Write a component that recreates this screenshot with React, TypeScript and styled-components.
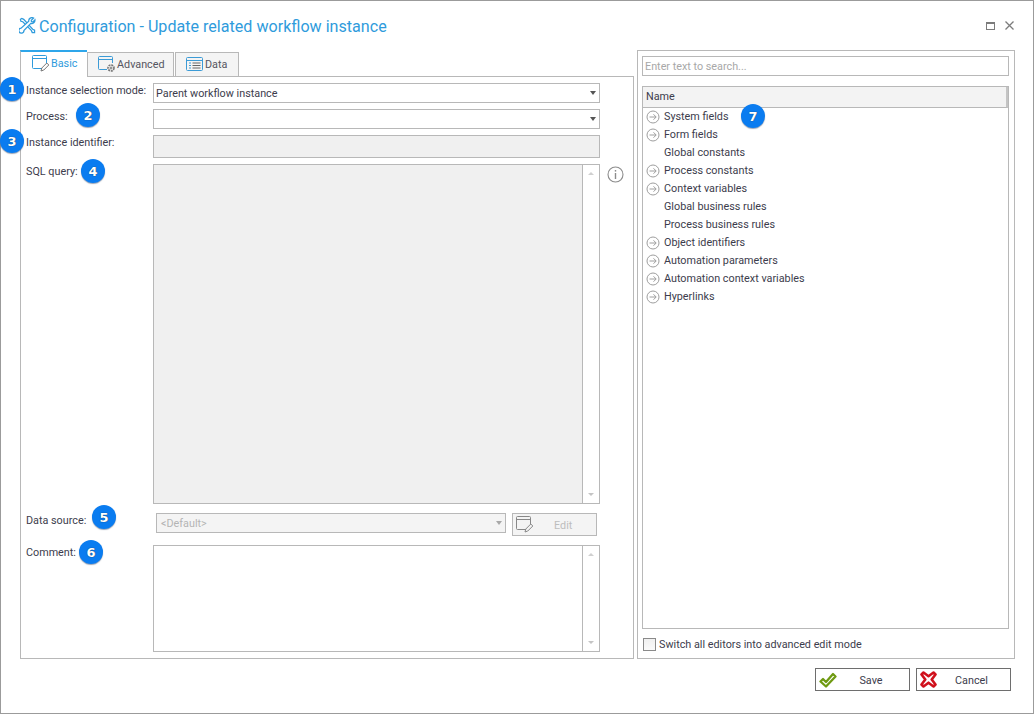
import React from "react";
import styled, { createGlobalStyle } from "styled-components";

const Global = createGlobalStyle`
  html, body { margin: 0; padding: 0; background: #fff; }
  * { box-sizing: border-box; }
`;

const FONT = `Roboto, "Noto Sans", "Liberation Sans", sans-serif`;
const TEXT = "#3c3c4c";
const LINE = "#b8b8b8";

const Win = styled.div`
  position: relative;
  width: 1034px;
  height: 714px;
  border: 1px solid #9b9b9b;
  background: #fff;
  font-family: ${FONT};
  font-size: 10.8px;
  color: ${TEXT};
  display: flex;
  flex-direction: column;
`;
const TitleBar = styled.div`
  height: 49px;
  flex: none;
  display: flex;
  align-items: center;
  padding: 2px 19px 0 17px;
`;
const TitleIcon = styled.span`
  display: flex;
  margin: -3px 0 0 1px;
`;
const Title = styled.div`
  font-size: 16.1px;
  color: #2f9bdc;
  margin: 0 0 0 3px;
  flex: 1;
  white-space: nowrap;
`;
const WinButtons = styled.div`
  display: flex;
  align-items: center;
  gap: 10px;
  margin-top: -2px;
`;
const Main = styled.div`
  display: flex;
  gap: 3px;
  padding-left: 19px;
  height: 609px;
  flex: none;
`;
const LeftCol = styled.div`
  width: 614px;
  display: flex;
  flex-direction: column;
`;
const Tabs = styled.div`
  height: 27px;
  flex: none;
  display: flex;
  margin-bottom: -1px;
`;
const Tab = styled.div<{ $active?: boolean; $w: number; $gap: number }>`
  width: ${(p) => p.$w}px;
  display: flex;
  align-items: center;
  gap: ${(p) => p.$gap}px;
  padding-left: ${(p) => (p.$active ? 11 : 10)}px;
  padding-bottom: ${(p) => (p.$active ? 2 : 1)}px;
  background: ${(p) => (p.$active ? "#fff" : "#f4f4f4")};
  border: 1px solid ${LINE};
  border-top: ${(p) => (p.$active ? "2px solid #2ea6ea" : `1px solid ${LINE}`)};
  border-bottom: ${(p) => (p.$active ? "none" : `1px solid ${LINE}`)};
  border-right: ${(p) => (p.$active ? "none" : `1px solid ${LINE}`)};
  margin-top: ${(p) => (p.$active ? 0 : 2)}px;
  margin-right: ${(p) => (p.$active ? 0 : 1)}px;
  color: ${(p) => (p.$active ? "#2f9bdc" : "#555560")};
  position: relative;
  z-index: ${(p) => (p.$active ? 2 : 1)};
`;
const TabPanel = styled.div`
  flex: 1;
  border: 1px solid ${LINE};
  padding: 6px 0 0 5px;
  display: flex;
  flex-direction: column;
`;
const Row = styled.div<{ $h: number; $mb?: number }>`
  height: ${(p) => p.$h}px;
  margin-bottom: ${(p) => p.$mb ?? 6}px;
  display: grid;
  grid-template-columns: 127px 447px 1fr;
  flex: none;
`;
const Label = styled.div`
  line-height: 15px;
  white-space: nowrap;
`;
const Field = styled.div<{ $disabled?: boolean }>`
  border: 1px solid ${LINE};
  background: ${(p) => (p.$disabled ? "#f0f0f0" : "#fff")};
  display: flex;
  align-items: center;
  padding-left: 2px;
  white-space: nowrap;
`;
const Caret = styled.span<{ $dim?: boolean }>`
  margin-left: auto;
  margin-right: 3px;
  width: 0;
  height: 0;
  border-left: 3.5px solid transparent;
  border-right: 3.5px solid transparent;
  border-top: 4px solid ${(p) => (p.$dim ? "#a8a8a8" : "#555")};
`;
const TextArea = styled.div<{ $disabled?: boolean }>`
  border: 1px solid ${LINE};
  background: ${(p) => (p.$disabled ? "#f0f0f0" : "#fff")};
  display: flex;
  justify-content: flex-end;
`;
const Scroll = styled.div`
  width: 17px;
  border-left: 1px solid ${LINE};
  background: #fff;
  display: flex;
  flex-direction: column;
  justify-content: space-between;
  align-items: center;
  padding: 7px 0;
`;
const ArrowUp = styled.span`
  width: 0;
  height: 0;
  border-left: 3px solid transparent;
  border-right: 3px solid transparent;
  border-bottom: 3px solid #d0d0d0;
`;
const ArrowDown = styled.span`
  width: 0;
  height: 0;
  border-left: 3px solid transparent;
  border-right: 3px solid transparent;
  border-top: 3px solid #c4c4c4;
`;
const InfoCell = styled.div`
  padding: 2px 0 0 7px;
`;
const SourceCell = styled.div`
  display: flex;
  align-items: flex-start;
  padding-left: 3px;
  gap: 6px;
`;
const SourceSelect = styled.div`
  width: 350px;
  height: 20px;
  border: 1px solid ${LINE};
  background: #f4f4f4;
  color: #b4b4b4;
  display: flex;
  align-items: center;
  padding-left: 4px;
`;
const EditBtn = styled.div`
  width: 85px;
  height: 23px;
  border: 1px solid ${LINE};
  background: #f4f4f4;
  color: #bdbdbd;
  display: flex;
  align-items: center;
  padding-left: 3px;
`;
const EditText = styled.span`
  margin-left: 20px;
  padding-top: 2px;
`;
const RightPanel = styled.div`
  width: 378px;
  border: 1px solid ${LINE};
  padding: 5px 5px 0 4px;
  display: flex;
  flex-direction: column;
`;
const Search = styled.div`
  height: 20px;
  flex: none;
  border: 1px solid ${LINE};
  color: #a8a8a8;
  display: flex;
  align-items: center;
  padding-left: 2px;
`;
const Tree = styled.div`
  margin-top: 10px;
  height: 543px;
  flex: none;
  border: 1px solid ${LINE};
`;
const TreeHead = styled.div`
  height: 21px;
  background: #f3f3f3;
  border-bottom: 1px solid ${LINE};
  border-right: 2px solid #c4c4c4;
  display: flex;
  align-items: center;
  padding: 0 0 1px 3px;
`;
const TreeRow = styled.div`
  height: 18px;
  display: flex;
  align-items: center;
  padding-left: 3px;
  white-space: nowrap;
  position: relative;
  top: -1px;
`;
const TreeIcon = styled.span`
  width: 18px;
  height: 14px;
  flex: none;
  display: flex;
  align-items: center;
  position: relative;
  top: 1px;
`;
const CheckRow = styled.div`
  display: flex;
  align-items: center;
  gap: 3px;
  margin-top: 9px;
  padding-left: 1px;
`;
const Check = styled.span`
  width: 13px;
  height: 13px;
  border: 1px solid #8a8a8a;
  background: linear-gradient(#f0f0f0, #fafafa);
`;
const CheckLabel = styled.span`
  line-height: 13px;
`;
const Footer = styled.div`
  display: flex;
  justify-content: flex-end;
  gap: 6px;
  padding: 9px 22px 0 0;
`;
const Btn = styled.div`
  width: 95px;
  height: 23px;
  border: 1px solid #6e6e6e;
  background: #fff;
  display: flex;
  align-items: center;
  padding-left: 3px;
`;
const BtnText = styled.span`
  flex: 1;
  text-align: center;
  padding: 2px 4px 0 0;
`;
const Badge = styled.span<{ $x: number; $y: number }>`
  position: absolute;
  left: ${(p) => p.$x - 13}px;
  top: ${(p) => p.$y - 13}px;
  width: 24px;
  height: 24px;
  border-radius: 50%;
  background: #0a7cf0;
  box-shadow: 0 1px 1px rgba(70, 90, 120, 0.55);
  color: #fff;
  font-family: "DejaVu Sans", sans-serif;
  font-weight: 700;
  font-size: 13px;
  display: flex;
  align-items: center;
  justify-content: center;
  text-shadow: 0 0 1px #123;
`;

const ToolsIcon = () => (
  <svg width="17" height="17" viewBox="0 0 18 18" fill="none" stroke="#2f9bdc" strokeWidth="1.3">
    <path d="M2 4.5 1.5 2.5 3 1.5 5 2.5 14.5 13 16.5 14 16.5 16.5 14 16.5 13.2 14.5 4 5z" />
    <path d="M15.5 1.2 13 3.5 13.2 5 14.7 5.2 16.9 3A3.6 3.6 0 0 1 12.5 6.8L5.2 14.3A2.7 2.7 0 1 1 2.2 11.8L10.3 4.5A3.4 3.4 0 0 1 15.5 1.2z" fill="#fff" />
  </svg>
);
const EditWinIcon = ({ color = "#2f9bdc", pen = "#777" }: { color?: string; pen?: string }) => (
  <svg width="18" height="17" viewBox="0 0 18 17" fill="none" stroke={color}>
    <path d="M10 13.5H1.5a1 1 0 0 1-1-1V1.5a1 1 0 0 1 1-1h12a1 1 0 0 1 1 1V8" />
    <path d="M.5 3.5h14" />
    <path d="M9 16l.8-3 5-5 2 2-5 5z" stroke={pen} />
  </svg>
);
const GearWinIcon = () => (
  <svg width="18" height="17" viewBox="0 0 18 17" fill="none" stroke="#3c9bd6">
    <path d="M9 13.5H1.5a1 1 0 0 1-1-1V1.5a1 1 0 0 1 1-1h12a1 1 0 0 1 1 1V7" />
    <path d="M.5 3.5h14" />
    <circle cx="13" cy="12" r="3" stroke="#777" strokeDasharray="2 .8" strokeWidth="1.6" />
    <circle cx="13" cy="12" r="1" stroke="#777" />
  </svg>
);
const ListWinIcon = () => (
  <svg width="17" height="14" viewBox="0 0 17 14" fill="none" stroke="#3c9bd6">
    <rect x=".5" y=".5" width="16" height="13" rx="1" />
    <path d="M.5 3.5h16M3 6h2M3 8.5h2M3 11h2" />
    <path d="M6.5 6h8M6.5 8.5h8M6.5 11h8" stroke="#666" />
  </svg>
);
const InfoIcon = () => (
  <svg width="17" height="17" viewBox="0 0 17 17" fill="none" stroke="#8c8c8c">
    <circle cx="8.5" cy="8.5" r="7.5" strokeWidth="1.1" />
    <path d="M8.5 7v6" strokeWidth="1.4" />
    <path d="M8.5 4v1.6" strokeWidth="1.4" />
  </svg>
);
const ArrowCircle = () => (
  <svg width="14" height="14" viewBox="0 0 14 14" fill="none" stroke="#9e9e9e">
    <circle cx="7" cy="7" r="6" />
    <path d="M3.5 7h6.5M7.5 4.3 10.2 7 7.5 9.7" />
  </svg>
);
const CheckIcon = () => (
  <svg width="18" height="16" viewBox="0 0 18 16" fill="none" strokeLinejoin="round">
    <path d="M1.5 9.5 4 7 7 10 14 2 16.5 4.5 7 14.5z" fill="#fff" stroke="#6f9a12" strokeWidth="2.3" />
  </svg>
);
const CrossIcon = () => (
  <svg width="17" height="17" viewBox="0 0 17 17" fill="none">
    <path d="M3.5 1.5 8.5 5.2 13.5 1.5 15.5 3.5 11.7 8.5 15.5 13.5 13.5 15.5 8.5 11.7 3.5 15.5 1.5 13.5 5.3 8.5 1.5 3.5z" fill="#fff" stroke="#d0101c" strokeWidth="2.6" strokeLinejoin="round" />
  </svg>
);
const MaxIcon = () => (
  <svg width="9" height="8" viewBox="0 0 9 8" fill="none" stroke="#7c7c7c">
    <rect x=".5" y=".5" width="8" height="7" />
    <path d="M0 1.5h9" />
  </svg>
);
const CloseIcon = () => (
  <svg width="9" height="9" viewBox="0 0 9 9" fill="none" stroke="#7c7c7c" strokeWidth="1.3">
    <path d="M.5.5l8 8M8.5.5l-8 8" />
  </svg>
);

const treeItems: [string, boolean][] = [
  ["System fields", true],
  ["Form fields", true],
  ["Global constants", false],
  ["Process constants", true],
  ["Context variables", true],
  ["Global business rules", false],
  ["Process business rules", false],
  ["Object identifiers", true],
  ["Automation parameters", true],
  ["Automation context variables", true],
  ["Hyperlinks", true],
];

const badges: [number, number, number][] = [
  [1, 12, 89],
  [2, 88, 115],
  [3, 12, 141],
  [4, 93, 171],
  [5, 104, 517],
  [6, 91, 552],
  [7, 753, 116],
];

export default function App() {
  return (
    <>
      <Global />
      <Win>
        <TitleBar>
          <TitleIcon>
            <ToolsIcon />
          </TitleIcon>
          <Title>Configuration - Update related workflow instance</Title>
          <WinButtons>
            <MaxIcon />
            <CloseIcon />
          </WinButtons>
        </TitleBar>
        <Main>
          <LeftCol>
            <Tabs>
              <Tab $active $w={67} $gap={1}>
                <EditWinIcon />
                Basic
              </Tab>
              <Tab $w={87} $gap={1}>
                <GearWinIcon />
                Advanced
              </Tab>
              <Tab $w={64} $gap={2}>
                <ListWinIcon />
                Data
              </Tab>
            </Tabs>
            <TabPanel>
              <Row $h={20}>
                <Label>Instance selection mode:</Label>
                <Field>
                  Parent workflow instance
                  <Caret />
                </Field>
              </Row>
              <Row $h={20}>
                <Label>Process:</Label>
                <Field>
                  <Caret />
                </Field>
              </Row>
              <Row $h={23}>
                <Label>Instance identifier:</Label>
                <Field $disabled />
              </Row>
              <Row $h={340} $mb={9}>
                <Label>SQL query:</Label>
                <TextArea $disabled>
                  <Scroll>
                    <ArrowUp />
                    <ArrowDown />
                  </Scroll>
                </TextArea>
                <InfoCell>
                  <InfoIcon />
                </InfoCell>
              </Row>
              <Row $h={23} $mb={9}>
                <Label>Data source:</Label>
                <SourceCell>
                  <SourceSelect>
                    &lt;Default&gt;
                    <Caret $dim />
                  </SourceSelect>
                  <EditBtn>
                    <EditWinIcon color="#888" pen="#888" />
                    <EditText>Edit</EditText>
                  </EditBtn>
                </SourceCell>
              </Row>
              <Row $h={107} $mb={0}>
                <Label>Comment:</Label>
                <TextArea>
                  <Scroll>
                    <ArrowUp />
                    <ArrowDown />
                  </Scroll>
                </TextArea>
              </Row>
            </TabPanel>
          </LeftCol>
          <RightPanel>
            <Search>Enter text to search...</Search>
            <Tree>
              <TreeHead>Name</TreeHead>
              {treeItems.map(([name, hasIcon]) => (
                <TreeRow key={name}>
                  <TreeIcon>{hasIcon && <ArrowCircle />}</TreeIcon>
                  {name}
                </TreeRow>
              ))}
            </Tree>
            <CheckRow>
              <Check />
              <CheckLabel>Switch all editors into advanced edit mode</CheckLabel>
            </CheckRow>
          </RightPanel>
        </Main>
        <Footer>
          <Btn>
            <CheckIcon />
            <BtnText>Save</BtnText>
          </Btn>
          <Btn>
            <CrossIcon />
            <BtnText>Cancel</BtnText>
          </Btn>
        </Footer>
        {badges.map(([n, x, y]) => (
          <Badge key={n} $x={x} $y={y}>
            {n}
          </Badge>
        ))}
      </Win>
    </>
  );
}
